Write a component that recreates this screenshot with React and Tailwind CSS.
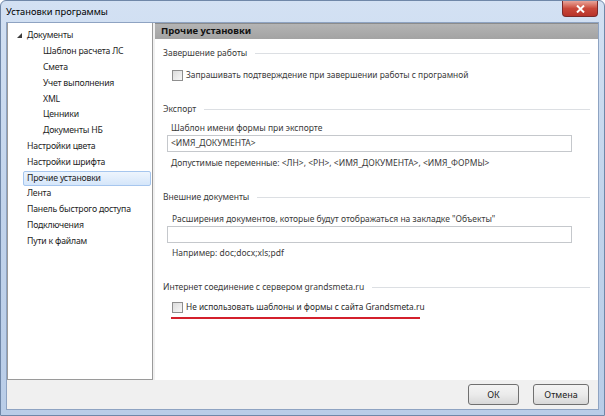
const treeItems = [
  { label: "Документы", level: 0, expanded: true },
  { label: "Шаблон расчета ЛС", level: 1 },
  { label: "Смета", level: 1 },
  { label: "Учет выполнения", level: 1 },
  { label: "XML", level: 1 },
  { label: "Ценники", level: 1 },
  { label: "Документы НБ", level: 1 },
  { label: "Настройки цвета", level: 0 },
  { label: "Настройки шрифта", level: 0 },
  { label: "Прочие установки", level: 0, selected: true },
  { label: "Лента", level: 0 },
  { label: "Панель быстрого доступа", level: 0 },
  { label: "Подключения", level: 0 },
  { label: "Пути к файлам", level: 0 },
];

const font = { fontFamily: '"Noto Sans", "Open Sans", sans-serif' };

// group heading with the thin rule after it
const GroupTitle = ({ children, className = "" }) => (
  <div className={"flex items-center h-[16px] pl-[8px] pr-[8px] " + className}>
    <span className="text-[8.5px] text-[#3a3a3a] whitespace-nowrap">{children}</span>
    <div className="flex-1 h-px bg-[#dcdfe3] ml-[8px]"></div>
  </div>
);

const CheckBox = () => (
  <div className="w-[11px] h-[11px] border border-[#8f8f8f] bg-gradient-to-br from-[#dcdcdc] to-[#f8f8f8] shrink-0"></div>
);

const App = () => {
  return (
    <div
      className="w-[605px] h-[416px] flex flex-col bg-gradient-to-b from-[#d3e1f3] via-[#c1d3eb] to-[#b9cde8] rounded-t-[6px] border border-[#6f87a8] overflow-hidden"
      style={font}
    >
      {/* Title bar */}
      <div className="h-[21px] flex justify-between shrink-0">
        <span className="pl-[5px] pt-[4px] text-[9.3px] leading-[14px] text-black">
          Установки программы
        </span>
        <div className="mr-[6px] w-[36px] h-[16px] rounded-b-[4px] border border-t-0 border-[#7a2a2a] bg-gradient-to-b from-[#e8a49a] via-[#c9483a] to-[#b8332a] flex items-center justify-center">
          <svg width="9" height="8" viewBox="0 0 9 8">
            <path d="M1 0.5 L8 7.5 M8 0.5 L1 7.5" stroke="#fff" strokeWidth="2" />
          </svg>
        </div>
      </div>

      {/* Client area */}
      <div className="flex-1 mx-[5px] mb-[5px] border border-[#8ea3c2] bg-[#f0f0f0] flex flex-col">
        <div className="h-[357px] flex shrink-0">
          {/* Tree */}
          <div className="w-[146px] bg-white border border-t-0 border-[#9a9a9a] pt-[2px]">
            <div className="pt-[3px]">
              {treeItems.map((item) => (
                <div
                  key={item.label}
                  className={
                    "h-[15.8px] flex items-center " +
                    (item.level === 0 ? "pl-[19px]" : "pl-[35px]")
                  }
                >
                  {item.level === 0 && (
                    <span className="w-[10px] flex items-center justify-start -ml-[10px]">
                      {item.expanded && (
                        <svg width="5" height="5" viewBox="0 0 5 5">
                          <path d="M5 0 L5 5 L0 5 Z" fill="#3c3c3c" />
                        </svg>
                      )}
                    </span>
                  )}
                  <span
                    className={
                      "text-[8.7px] tracking-[-0.2px] leading-[13px] whitespace-nowrap " +
                      (item.selected
                        ? "flex-1 mr-[1px] -ml-[4px] pl-[3px] rounded-[2px] border border-[#a6c6ee] bg-gradient-to-b from-[#eef5fd] to-[#d5e6fa] text-[#1e1e1e]"
                        : "text-[#1e1e1e]")
                    }
                  >
                    {item.label}
                  </span>
                </div>
              ))}
            </div>
          </div>

          {/* Settings panel */}
          <div className="flex-1 ml-[2px] bg-white flex flex-col">
            <div className="h-[16px] bg-gradient-to-b from-[#b4b4b4] to-[#a3a3a3] border-t border-[#8c8c8c] pl-[6px] flex items-center">
              <span className="text-[9.5px] font-bold text-[#111]">Прочие установки</span>
            </div>

            <GroupTitle className="mt-[6px]">Завершение работы</GroupTitle>
            <div className="mt-[6px] h-[16px] flex items-center pl-[17px] gap-[3px]">
              <CheckBox />
              <span className="text-[8.4px] text-[#3a3a3a] whitespace-nowrap">
                Запрашивать подтверждение при завершении работы с програмной
              </span>
            </div>

            <GroupTitle className="mt-[18px]">Экспорт</GroupTitle>
            <div className="mt-[4px] h-[14px] pl-[16px] flex items-center">
              <span className="text-[8.5px] text-[#3a3a3a]">Шаблон имени формы при экспорте</span>
            </div>
            <div className="ml-[12px] w-[405px] h-[17px] border border-[#c5c8cc] flex items-center pl-[3px]">
              <span className="text-[8.5px] text-[#3a3a3a]">&lt;ИМЯ_ДОКУМЕНТА&gt;</span>
            </div>
            <div className="mt-[3px] h-[16px] pl-[16px] flex items-center">
              <span className="text-[8.5px] text-[#3a3a3a] whitespace-nowrap">
                Допустимые переменные: &lt;ЛН&gt;, &lt;РН&gt;, &lt;ИМЯ_ДОКУМЕНТА&gt;, &lt;ИМЯ_ФОРМЫ&gt;
              </span>
            </div>

            <GroupTitle className="mt-[18px]">Внешние документы</GroupTitle>
            <div className="mt-[7px] h-[14px] pl-[17px] flex items-center">
              <span className="text-[8.5px] text-[#3a3a3a] whitespace-nowrap">
                Расширения документов, которые будут отображаться на закладке "Объекты"
              </span>
            </div>
            <div className="ml-[12px] w-[405px] h-[17px] border border-[#c5c8cc]"></div>
            <div className="mt-[2px] h-[16px] pl-[17px] flex items-center">
              <span className="text-[8.5px] text-[#3a3a3a]">Например: doc;docx;xls;pdf</span>
            </div>

            <GroupTitle className="mt-[18px]">Интернет соединение с сервером grandsmeta.ru</GroupTitle>
            <div className="mt-[4px] h-[16px] flex items-center pl-[17px] gap-[3px]">
              <CheckBox />
              <span className="text-[8.3px] text-[#2a2a2a] whitespace-nowrap">
                Не использовать шаблоны и формы с сайта Grandsmeta.ru
              </span>
            </div>
            <div className="mt-[2px] ml-[16px] w-[249px] h-[2px] bg-[#d4202c]"></div>
          </div>
        </div>

        {/* Buttons */}
        <div className="flex-1 flex justify-end items-start pt-[4px] pr-[9px] gap-[14px]">
          <button className="w-[51px] h-[21px] rounded-[3px] border border-[#707070] bg-gradient-to-b from-[#f4f4f4] via-[#ebebeb] to-[#d8d8d8] text-[9px] text-[#222]">
            ОК
          </button>
          <button className="w-[56px] h-[21px] rounded-[3px] border border-[#707070] bg-gradient-to-b from-[#f4f4f4] via-[#ebebeb] to-[#d8d8d8] text-[9px] text-[#222]">
            Отмена
          </button>
        </div>
      </div>
    </div>
  );
};

export default App;
